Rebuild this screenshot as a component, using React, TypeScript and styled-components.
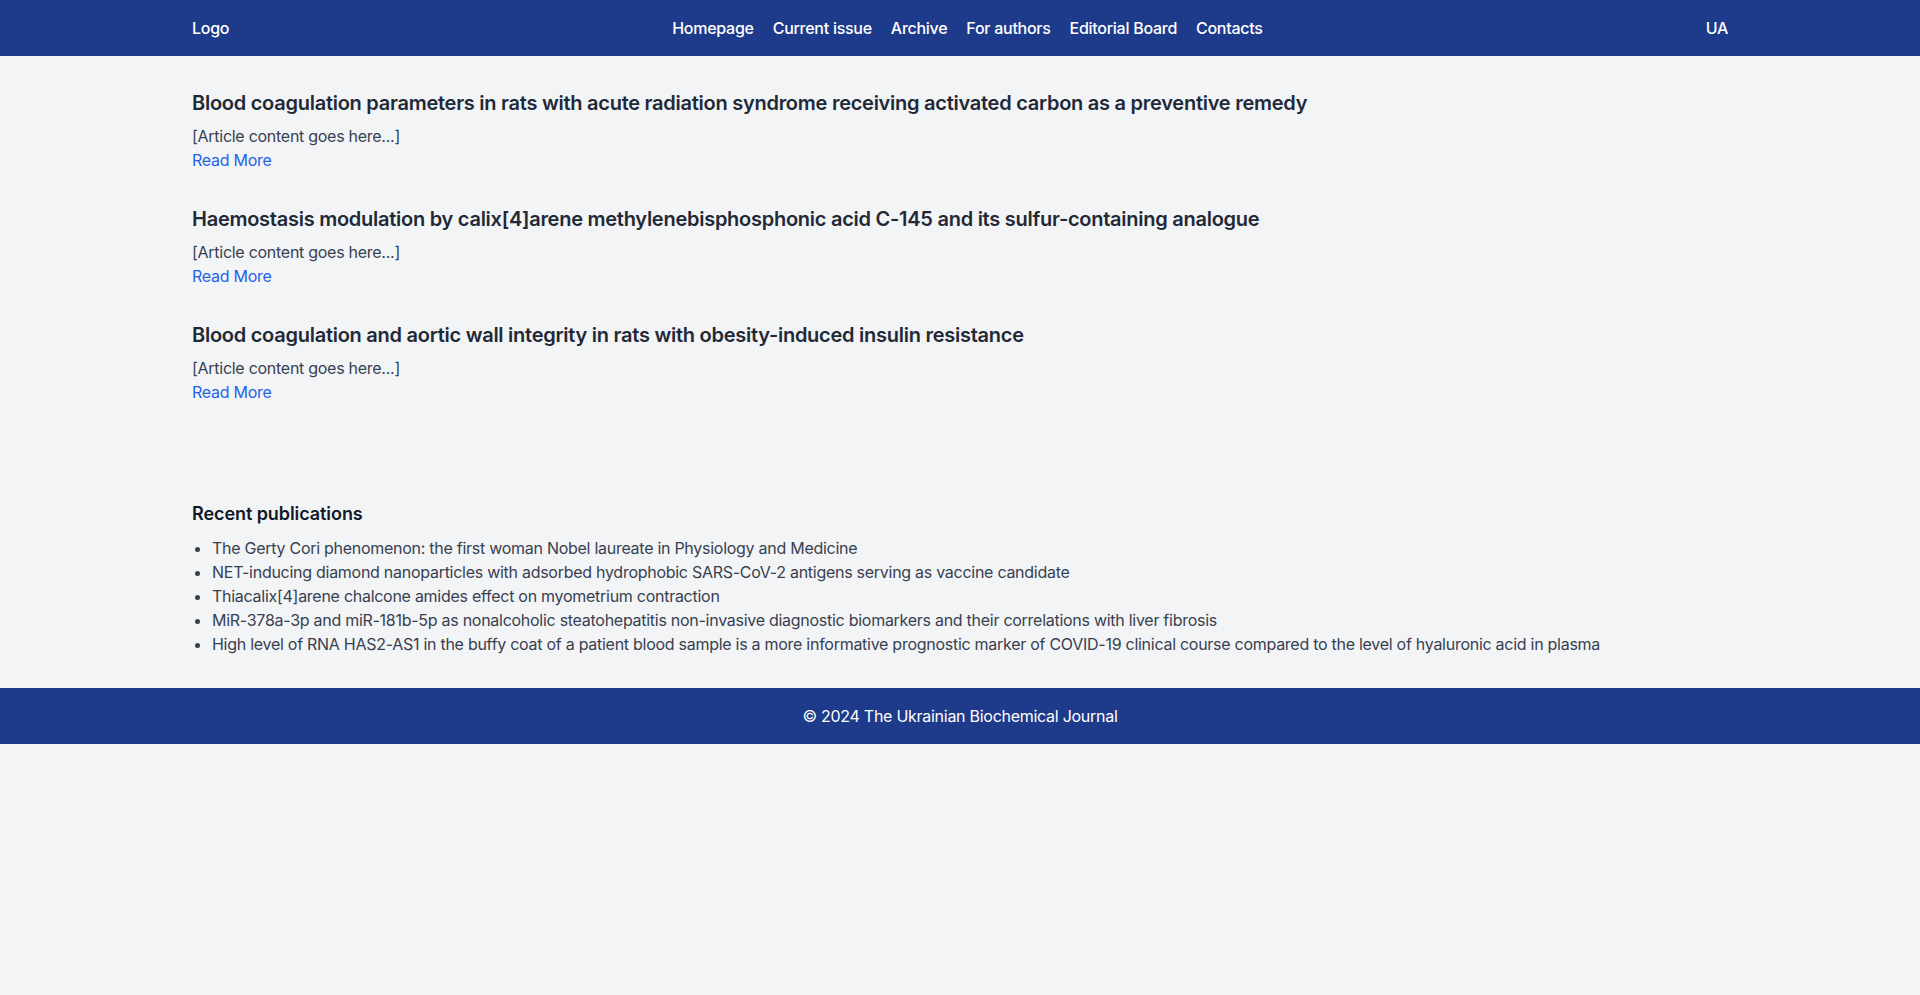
import React from "react";
import styled, { createGlobalStyle } from "styled-components";

const GlobalStyle = createGlobalStyle`
  html, body {
    margin: 0;
    padding: 0;
    background: #f3f4f6;
    font-family: Inter, "Noto Sans", "Liberation Sans", sans-serif;
    color: #1f2937;
    letter-spacing: -0.017em;
    -webkit-font-smoothing: antialiased;
  }
  * { box-sizing: border-box; }
`;

const Header = styled.header`
  background: #1e3a8a;
  color: #ffffff;
  padding: 16px 0;
`;

const Container = styled.div`
  max-width: 1536px;
  margin: 0 auto;
`;

const HeaderRow = styled(Container)`
  display: flex;
  align-items: center;
  justify-content: space-between;
  font-size: 16px;
  line-height: 24px;
  font-weight: 500;
`;

const Nav = styled.nav`
  display: flex;
  gap: 19px;
`;

const NavLink = styled.a`
  color: #ffffff;
  text-decoration: none;
  font-weight: 500;
`;

const Main = styled(Container)`
  padding: 32px 0;
`;

const Article = styled.article`
  margin-bottom: 32px;
`;

const ArticleTitle = styled.h2`
  margin: 0;
  padding-top: 1px;
  font-size: 20px;
  line-height: 28px;
  font-weight: 600;
  letter-spacing: -0.013em;
  color: #1f2937;
`;

const ArticleText = styled.p`
  margin: 7px 0 0;
  font-size: 16px;
  line-height: 24px;
  color: #374151;
`;

const ReadMore = styled.a`
  display: block;
  font-size: 16px;
  line-height: 24px;
  color: #2563eb;
  text-decoration: none;
`;

const Recent = styled(Container)`
  padding: 32px 0;
`;

const RecentTitle = styled.h3`
  margin: 0 0 8px;
  font-size: 18px;
  line-height: 28px;
  font-weight: 600;
  letter-spacing: -0.004em;
  color: #111827;
`;

const List = styled.ul`
  margin: 0;
  padding-left: 20px;
  list-style: disc;
`;

const Item = styled.li`
  font-size: 16px;
  line-height: 24px;
  color: #374151;
`;

const Footer = styled.footer`
  background: #1e3a8a;
  color: #ffffff;
  padding: 16px 0;
  text-align: center;
  font-size: 16px;
  line-height: 24px;
`;

const articles = [
  "Blood coagulation parameters in rats with acute radiation syndrome receiving activated carbon as a preventive remedy",
  "Haemostasis modulation by calix[4]arene methylenebisphosphonic acid C-145 and its sulfur-containing analogue",
  "Blood coagulation and aortic wall integrity in rats with obesity-induced insulin resistance",
];

const recent = [
  "The Gerty Cori phenomenon: the first woman Nobel laureate in Physiology and Medicine",
  "NET-inducing diamond nanoparticles with adsorbed hydrophobic SARS-CoV-2 antigens serving as vaccine candidate",
  "Thiacalix[4]arene chalcone amides effect on myometrium contraction",
  "MiR-378a-3p and miR-181b-5p as nonalcoholic steatohepatitis non-invasive diagnostic biomarkers and their correlations with liver fibrosis",
  "High level of RNA HAS2-AS1 in the buffy coat of a patient blood sample is a more informative prognostic marker of COVID-19 clinical course compared to the level of hyaluronic acid in plasma",
];

const navItems = ["Homepage", "Current issue", "Archive", "For authors", "Editorial Board", "Contacts"];

export default function App() {
  return (
    <>
      <GlobalStyle />
      <Header>
        <HeaderRow>
          <div>Logo</div>
          <Nav>
            {navItems.map((n) => (
              <NavLink key={n} href="#">
                {n}
              </NavLink>
            ))}
          </Nav>
          <div>UA</div>
        </HeaderRow>
      </Header>
      <Main as="main">
        {articles.map((a) => (
          <Article key={a}>
            <ArticleTitle>{a}</ArticleTitle>
            <ArticleText>[Article content goes here...]</ArticleText>
            <ReadMore href="#">Read More</ReadMore>
          </Article>
        ))}
      </Main>
      <Recent as="section">
        <RecentTitle>Recent publications</RecentTitle>
        <List>
          {recent.map((r) => (
            <Item key={r}>{r}</Item>
          ))}
        </List>
      </Recent>
      <Footer>© 2024 The Ukrainian Biochemical Journal</Footer>
    </>
  );
}
